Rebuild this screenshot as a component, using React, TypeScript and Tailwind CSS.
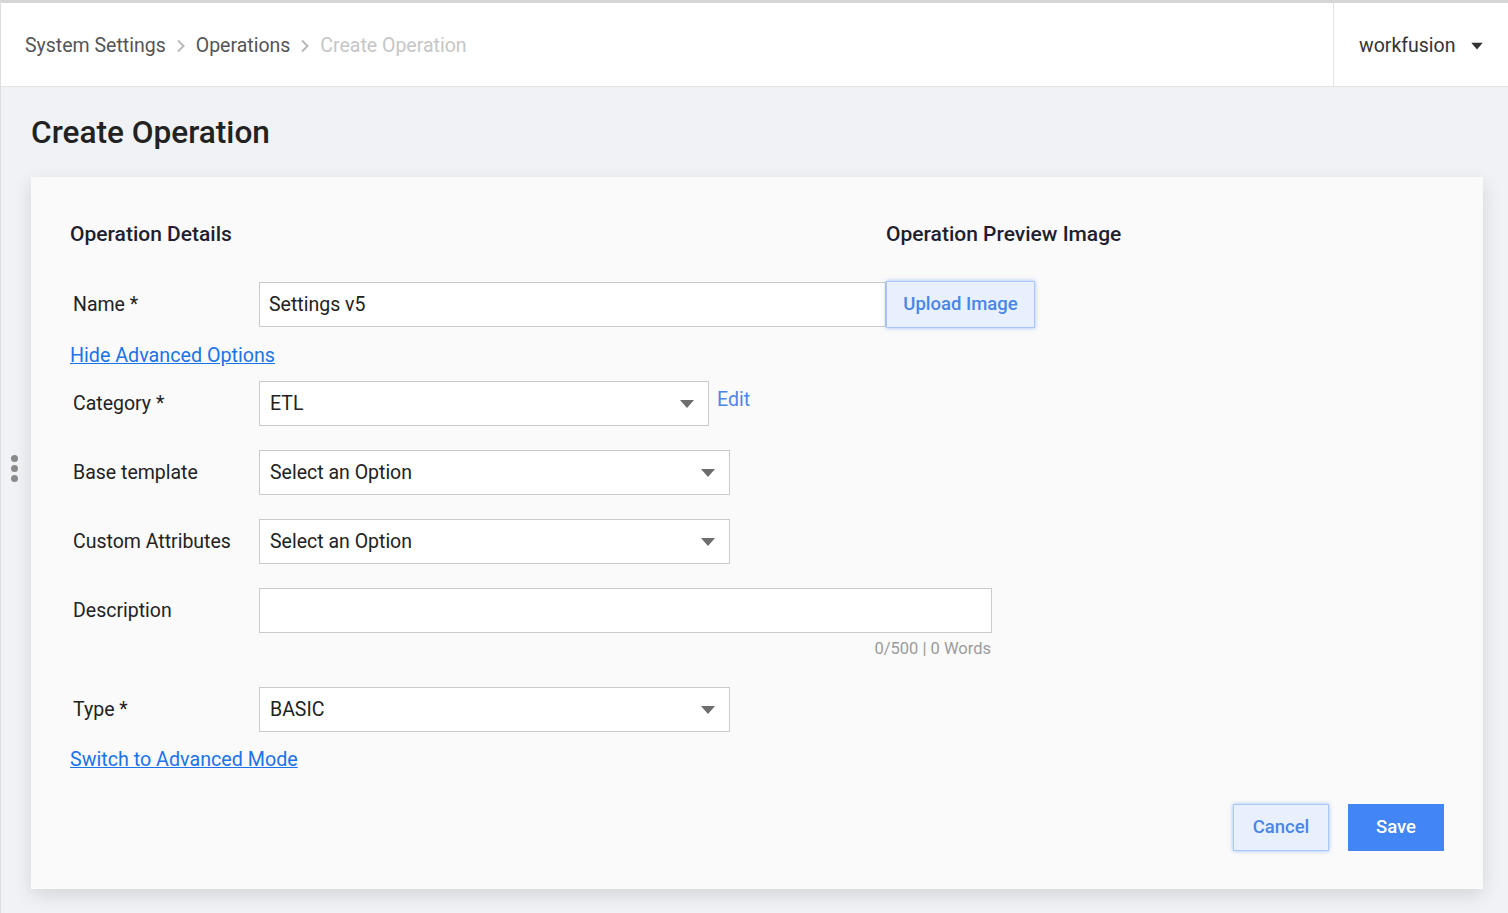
import React from 'react';

const font = { fontFamily: 'Roboto, "Noto Sans", sans-serif' };

const Caret = ({ className = '' }: { className?: string }) => (
  <svg width="14" height="8" viewBox="0 0 14 8" className={className}>
    <path d="M0 0 L14 0 L7 8 Z" fill="currentColor" />
  </svg>
);

const Chevron = () => (
  <svg width="10" height="14" viewBox="0 0 10 14" className="mx-[10px] text-[#b9b9b9]">
    <path d="M2 1.5 L7.5 7 L2 12.5" stroke="currentColor" strokeWidth="2" fill="none" />
  </svg>
);

const Select = ({ value, width }: { value: string; width: string }) => (
  <div className={`flex items-center justify-between h-[45px] bg-white border border-[#cbcbcb] pl-[10px] pr-[14px] ${width}`}>
    <span className="text-[19.5px] text-[#222]">{value}</span>
    <Caret className="text-[#6d6d6d]" />
  </div>
);

const Row = ({ label, children, className = '' }: { label: string; children: React.ReactNode; className?: string }) => (
  <div className={`flex items-center ${className}`}>
    <div className="w-[189px] pl-[3px] text-[19.5px] text-[#222]">{label}</div>
    {children}
  </div>
);

export default function App() {
  return (
    <div style={font} className="min-h-[913px] bg-[#f1f2f5] border-t-[3px] border-[#d6d6d6] border-l border-l-[#dedede] relative">
      {/* header */}
      <div className="flex h-[84px] bg-white border-b border-[#e3e3e3]">
        <div className="flex-1 flex items-center pl-[24px] pt-[2px] text-[19.5px]">
          <span className="text-[#555]">System Settings</span>
          <Chevron />
          <span className="text-[#555]">Operations</span>
          <Chevron />
          <span className="text-[#c6c6c6]">Create Operation</span>
        </div>
        <div className="w-[175px] border-l border-[#e3e3e3] flex items-center pl-[25px] pt-[2px] text-[19.5px] text-[#333]">
          workfusion
          <Caret className="ml-[14px] text-[#333] scale-[0.85]" />
        </div>
      </div>

      <div className="px-[30px]">
        <h1 className="pt-[26px] text-[31.6px] font-medium text-[#222] leading-[40px]">Create Operation</h1>

        <div className="mt-[24px] w-[1452px] h-[712px] bg-[#fafafa] shadow-[0_6px_18px_rgba(0,0,0,0.12)] pl-[39px] pr-[39px] pt-[44px] relative">
          <div className="flex text-[21px] font-medium text-[#1f1f2f] leading-[26px]">
            <div className="w-[816px]">Operation Details</div>
            <div>Operation Preview Image</div>
          </div>

          <Row label="Name *" className="mt-[34px]">
            <div className="flex items-center w-[627px] h-[45px] bg-white border border-[#cbcbcb] px-[9px] text-[19.5px] text-[#222]">
              Settings v5
            </div>
            <button className="h-[47px] w-[149px] bg-[#e8f0fe] border border-[#a9c7fb] shadow-[0_0_4px_rgba(66,133,244,0.5)] text-[#4a86e8] text-[18.5px] font-medium">
              Upload Image
            </button>
          </Row>

          <div className="mt-[15px] text-[19.7px] text-[#1a73e8] underline leading-[26px]">Hide Advanced Options</div>

          <Row label="Category *" className="mt-[12px]">
            <Select value="ETL" width="w-[450px]" />
            <span className="ml-[8px] -mt-[7px] text-[19.5px] text-[#4a86e8]">Edit</span>
          </Row>

          <Row label="Base template" className="mt-[24px]">
            <Select value="Select an Option" width="w-[471px]" />
          </Row>

          <Row label="Custom Attributes" className="mt-[24px]">
            <Select value="Select an Option" width="w-[471px]" />
          </Row>

          <Row label="Description" className="mt-[24px]">
            <div className="w-[733px] h-[45px] bg-white border border-[#cbcbcb]" />
          </Row>
          <div className="w-[921px] text-right text-[16.5px] text-[#9a9a9a] mt-[5px] leading-[22px]">0/500 | 0 Words</div>

          <Row label="Type *" className="mt-[27px]">
            <Select value="BASIC" width="w-[471px]" />
          </Row>

          <div className="mt-[15px] text-[19.7px] text-[#1a73e8] underline leading-[26px]">Switch to Advanced Mode</div>

          <div className="absolute right-[39px] bottom-[38px] flex gap-[19px]">
            <button className="h-[47px] w-[96px] bg-[#e8f0fe] border border-[#a9c7fb] shadow-[0_0_4px_rgba(66,133,244,0.5)] text-[#4a86e8] text-[18.5px] font-medium">
              Cancel
            </button>
            <button className="h-[47px] w-[96px] bg-[#4285f4] text-white text-[18.5px] font-medium">Save</button>
          </div>
        </div>
      </div>

      {/* drag handle */}
      <div className="absolute left-[10px] top-[452px] flex flex-col gap-[3px]">
        <span className="w-[7px] h-[7px] rounded-full bg-[#8a8a8a]" />
        <span className="w-[7px] h-[7px] rounded-full bg-[#8a8a8a]" />
        <span className="w-[7px] h-[7px] rounded-full bg-[#8a8a8a]" />
      </div>
    </div>
  );
}
